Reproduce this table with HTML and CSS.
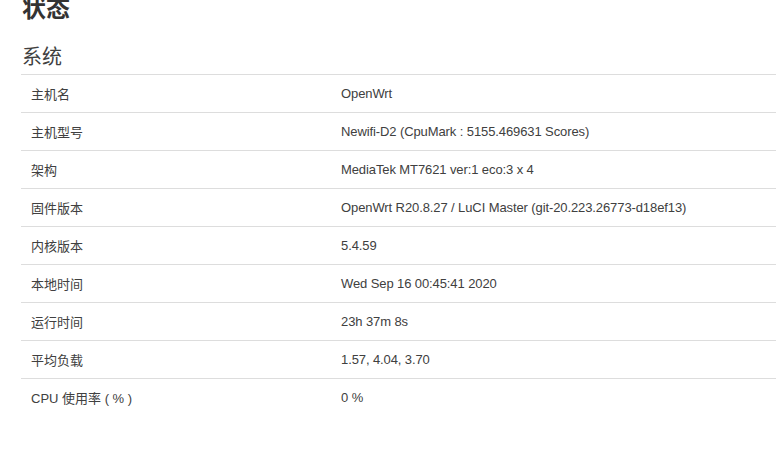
FILE: index.html
```html
<!DOCTYPE html>
<html lang="zh-CN">
<head>
<meta charset="utf-8">
<title>状态</title>
<link rel="stylesheet" href="styles.css">
</head>
<body>
<div class="page">
  <h2 class="title">状态</h2>
  <h3 class="section">系统</h3>
  <div class="table">
    <div class="row"><div class="key">主机名</div><div class="val">OpenWrt</div></div>
    <div class="row"><div class="key">主机型号</div><div class="val">Newifi-D2 (CpuMark : 5155.469631 Scores)</div></div>
    <div class="row"><div class="key">架构</div><div class="val">MediaTek MT7621 ver:1 eco:3 x 4</div></div>
    <div class="row"><div class="key">固件版本</div><div class="val">OpenWrt R20.8.27 / LuCI Master (git-20.223.26773-d18ef13)</div></div>
    <div class="row"><div class="key">内核版本</div><div class="val">5.4.59</div></div>
    <div class="row"><div class="key">本地时间</div><div class="val">Wed Sep 16 00:45:41 2020</div></div>
    <div class="row"><div class="key">运行时间</div><div class="val">23h 37m 8s</div></div>
    <div class="row"><div class="key">平均负载</div><div class="val">1.57, 4.04, 3.70</div></div>
    <div class="row"><div class="key">CPU 使用率 ( % )</div><div class="val">0 %</div></div>
  </div>
</div>
</body>
</html>
```
FILE: styles.css
```css
html, body {
  margin: 0;
  padding: 0;
  background: #fff;
}
body {
  font-family: "Liberation Sans", "Noto Sans CJK SC", sans-serif;
  color: #404040;
  font-size: 13px;
}
.page {
  padding-left: 21px;
}
.title {
  margin: -3px 0 0 1px;
  font-size: 24px;
  line-height: 24px;
  font-weight: bold;
  color: #333;
}
.section {
  margin: 26px 0 0 1px;
  font-size: 20px;
  line-height: 20px;
  font-weight: normal;
  color: #404040;
}
.table {
  margin-top: 7px;
}
.row {
  display: flex;
  align-items: center;
  height: 37px;
  border-top: 1px solid #ddd;
}
.key {
  width: 310px;
  padding-left: 10px;
}
.val {
  flex: 1;
  letter-spacing: -0.1px;
}
```
